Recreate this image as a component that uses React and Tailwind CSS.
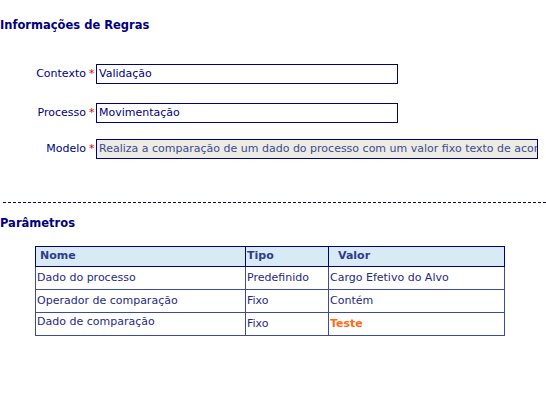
import React from 'react';

const rows = [
  { nome: 'Dado do processo', tipo: 'Predefinido', valor: 'Cargo Efetivo do Alvo' },
  { nome: 'Operador de comparação', tipo: 'Fixo', valor: 'Contém' },
  { nome: 'Dado de comparação', tipo: 'Fixo', valor: 'Teste', destaque: true },
];

const Field = ({ label, value, wide, className }) => (
  <div className={`flex items-center h-5 ${className || ''}`}>
    <span className="w-[86px] text-right text-[#000080]">{label}</span>
    <span className="w-[10px] pl-[3px] text-[#e00000]">*</span>
    <div
      className={`h-5 border border-[#000080] pl-[2px] overflow-hidden whitespace-nowrap leading-[18px] ${
        wide ? 'w-[442px] bg-[#ecebe4] text-[#3b4a90]' : 'w-[302px] bg-white text-[#000080]'
      }`}
    >
      {value}
    </div>
  </div>
);

export default function App() {
  return (
    <div className="w-[546px] h-[400px] bg-white text-[11px] font-['DejaVu_Sans',sans-serif]">
      <h1 className="pt-[18px] leading-[14px] text-[11.5px] font-bold text-[#000080]">Informações de Regras</h1>

      <Field label="Contexto" value="Validação" className="mt-[32px]" />
      <Field label="Processo" value="Movimentação" className="mt-[19px]" />
      <Field
        label="Modelo"
        value="Realiza a comparação de um dado do processo com um valor fixo texto de acordo com o operador"
        wide
        className="mt-[16px]"
      />

      <div className="mt-[43px] ml-[3px] border-t border-dashed border-[#000080]" />

      <h2 className="mt-[13px] leading-[14px] text-[11.5px] font-bold text-[#000080]">Parâmetros</h2>

      <table className="mt-[16px] ml-[35px] w-[470px] border-collapse border border-[#000080]">
        <thead>
          <tr className="h-5 bg-[#d8ebf5] text-[#2e3b8c] font-bold">
            <th className="w-[210px] border border-[#000080] text-left pl-[4px] font-bold">Nome</th>
            <th className="w-[83px] border border-[#000080] text-left pl-[1px] font-bold">Tipo</th>
            <th className="border border-[#000080] text-left pl-[9px] font-bold">Valor</th>
          </tr>
        </thead>
        <tbody className="text-[#1f2a80]">
          {rows.map((r, i) => (
            <tr key={r.nome} className="h-[23px]">
              <td className={`border border-[#3b4ba0] pl-[1px] ${i === 2 ? 'align-top pt-[1px]' : 'align-middle'}`}>
                {r.nome}
              </td>
              <td className="border border-[#3b4ba0] pl-[1px] align-middle">{r.tipo}</td>
              <td
                className={`border border-[#3b4ba0] pl-[1px] align-middle ${
                  r.destaque ? 'font-bold text-[#ff6a13]' : ''
                }`}
              >
                {r.valor}
              </td>
            </tr>
          ))}
        </tbody>
      </table>
    </div>
  );
}
